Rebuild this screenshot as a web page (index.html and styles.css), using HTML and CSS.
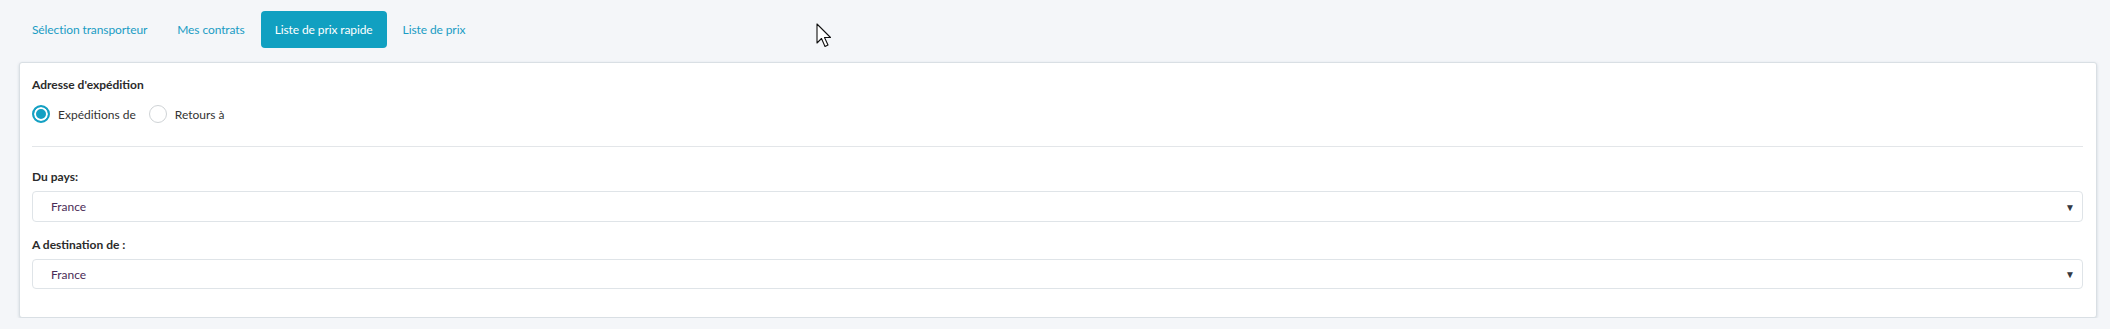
FILE: index.html
```html
<!DOCTYPE html>
<html lang="fr">
<head>
    <meta charset="UTF-8">
    <meta name="viewport" content="width=device-width, initial-scale=1.0">
    <title>Liste de prix rapide</title>
    <link rel="stylesheet" href="styles.css">
</head>
<body>
    <nav class="tabs">
        <a class="tab" href="#">Sélection transporteur</a>
        <a class="tab" href="#">Mes contrats</a>
        <a class="tab active" href="#">Liste de prix rapide</a>
        <a class="tab" href="#">Liste de prix</a>
    </nav>

    <div class="card">
        <div class="label">Adresse d'expédition</div>
        <div class="radios">
            <label class="radio"><input type="radio" name="mode" checked><span>Expéditions de</span></label>
            <label class="radio"><input type="radio" name="mode"><span>Retours à</span></label>
        </div>

        <hr class="sep">

        <label class="label" for="from">Du pays:</label>
        <div class="select-wrap">
            <select id="from" class="select">
                <option>France</option>
            </select>
            <span class="caret">&#9660;</span>
        </div>

        <label class="label second" for="to">A destination de :</label>
        <div class="select-wrap">
            <select id="to" class="select">
                <option>France</option>
            </select>
            <span class="caret">&#9660;</span>
        </div>
    </div>

    <!-- curseur de la souris visible sur la capture -->
    <svg class="cursor" width="20" height="30" viewBox="0 0 20 30">
        <path d="M1 1 L1 20 L5.5 15.5 L9 23.5 L12 22 L8.5 14.5 L14.5 14.5 Z" fill="#fff" stroke="#111" stroke-width="1.1" stroke-linejoin="round"/>
    </svg>
</body>
</html>
```

FILE: styles.css
```css
body {
    font-family: 'Lato', 'Open Sans', sans-serif;
    font-size: 12px;
    background-color: #f4f6f9;
    margin: 0;
    color: #2a2a2a;
}
.tabs {
    display: flex;
    gap: 2px;
    padding: 11px 0 0 18px;
    height: 37px;
}
.tab {
    display: flex;
    align-items: center;
    padding: 0 14px;
    color: #1a9cc4;
    text-decoration: none;
    border-radius: 4px;
    letter-spacing: -0.1px;
}
.tab.active {
    background-color: #11a0c1;
    color: white;
}
.card {
    margin: 14px 13px 0 19px;
    background-color: white;
    border: 1px solid #d9dfe4;
    border-radius: 3px;
    box-shadow: 0 1px 3px rgba(40, 70, 90, 0.18);
    padding: 13px 13px 28px 12px;
}
.label {
    display: block;
    font-weight: bold;
    line-height: 18px;
    color: #2b2b2b;
}
.label.second {
    margin-top: 14px;
}
.radios {
    display: flex;
    gap: 13px;
    margin-top: 10px;
    height: 20px;
}
.radio {
    display: flex;
    align-items: center;
    gap: 8px;
    color: #333;
}
.radio input {
    appearance: none;
    margin: 0;
    width: 18px;
    height: 18px;
    border: 1px solid #cfd3d6;
    border-radius: 50%;
    background: white;
}
.radio input:checked {
    border: 2px solid #14a0c3;
    box-shadow: inset 0 0 0 2px white;
    background: #14a0c3;
}
.sep {
    border: none;
    border-top: 1px solid #e3e6e9;
    margin: 22px 0 21px;
}
.select-wrap {
    position: relative;
    margin-top: 5px;
}
.select {
    appearance: none;
    width: 100%;
    height: 31px;
    padding: 0 18px;
    font-family: inherit;
    font-size: 12px;
    color: #4b2c57;
    background: white;
    border: 1px solid #dfe4e8;
    border-radius: 4px;
}
.select-wrap:last-child .select {
    height: 30px;
}
.caret {
    position: absolute;
    right: 8px;
    top: 50%;
    transform: translateY(-50%);
    font-size: 10px;
    color: #333842;
    pointer-events: none;
}
.cursor {
    position: absolute;
    left: 816px;
    top: 23px;
}
```
